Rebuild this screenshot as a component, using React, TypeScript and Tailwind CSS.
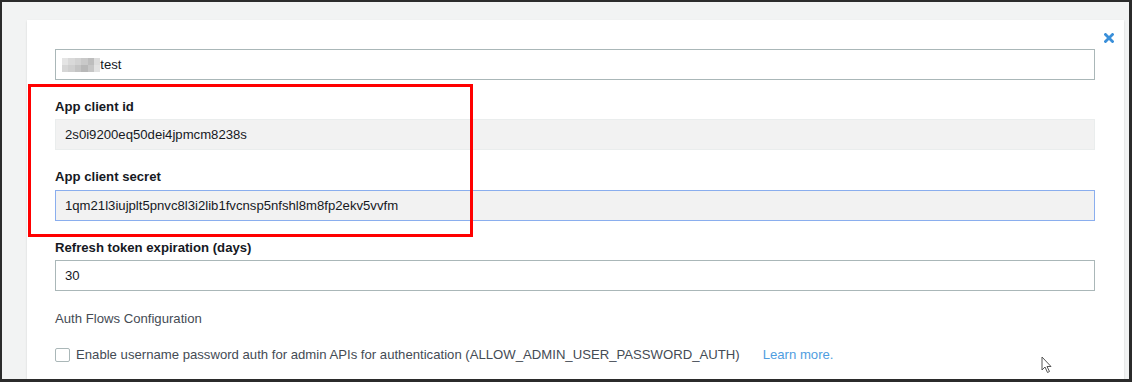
import React from "react";

const blur = [
  ["#e4e4e4", "#d9d9d9", "#d2d2d2", "#c9c9c9", "#bdbdbd", "#dcdcdc"],
  ["#d6d6d6", "#cfcfcf", "#c4c4c4", "#b8b8b8", "#c6c6c6", "#e2e2e2"],
];

export default function App() {
  return (
    <div className="w-[1132px] h-[382px] box-border overflow-hidden bg-[#f2f3f3] border-t-2 border-l-2 border-r-[3px] border-b-[3px] border-[#2b2b2b] pl-[25px] pt-[18px] pr-[5px] flex font-[family-name:Liberation_Sans,Arial,sans-serif] text-[13.15px] text-[#16191f]">
      <div className="relative flex-1 bg-white pl-[28px] pr-[29px] pt-[29px] shadow-[0_1px_2px_rgba(0,0,0,0.12)]">
        {/* close */}
        <svg className="absolute left-[1077px] top-[13px]" width="10" height="10" viewBox="0 0 10 10">
          <path d="M1.5 1.5 L8.5 8.5 M8.5 1.5 L1.5 8.5" stroke="#3a8fd9" strokeWidth="2.8" strokeLinecap="square" />
        </svg>

        {/* red annotation box */}
        <div className="absolute left-[1px] top-[64px] w-[445px] h-[153px] border-[3px] border-[#ff0000]" />

        {/* name input */}
        <div className="h-[31px] border border-[#aab7b8] bg-white flex items-center pl-[6px]">
          <div className="flex flex-col">
            {blur.map((row, i) => (
              <div key={i} className="flex">
                {row.map((c, j) => (
                  <div key={j} className="w-[6.4px] h-[7px]" style={{ backgroundColor: c }} />
                ))}
              </div>
            ))}
          </div>
          <span className="leading-[20px]">test</span>
        </div>

        <div className="mt-[17px] h-[20px] leading-[20px] font-bold">App client id</div>
        <div className="mt-[2px] h-[31px] border border-[#eaeded] bg-[#f2f2f2] flex items-center pl-[9px] text-[#16191f]">
          2s0i9200eq50dei4jpmcm8238s
        </div>

        <div className="mt-[17px] h-[20px] leading-[20px] font-bold">App client secret</div>
        <div className="mt-[3px] h-[31px] border border-[#8aaeee] bg-[#f2f2f2] flex items-center pl-[9px] text-[#16191f]">
          1qm21l3iujplt5pnvc8l3i2lib1fvcnsp5nfshl8m8fp2ekv5vvfm
        </div>

        <div className="mt-[17px] h-[20px] leading-[20px] font-bold">Refresh token expiration (days)</div>
        <div className="mt-[2px] h-[31px] border border-[#aab7b8] bg-white flex items-center pl-[9px]">
          30
        </div>

        <div className="mt-[18px] h-[20px] leading-[20px] text-[#444b54]">Auth Flows Configuration</div>

        <div className="mt-[16px] h-[20px] flex items-center">
          <div className="w-[15px] h-[14px] border border-[#aab7b8] rounded-[2px] bg-white" />
          <span className="ml-[6px] leading-[20px] text-[#444b54]">
            Enable username password auth for admin APIs for authentication (ALLOW_ADMIN_USER_PASSWORD_AUTH)
          </span>
          <span className="ml-[23px] leading-[20px] text-[#4f9de0]">Learn more.</span>
        </div>

        {/* mouse cursor */}
        <svg className="absolute left-[1014px] top-[336px]" width="12" height="18" viewBox="0 0 12 18">
          <path
            d="M1 1 L1 14 L4 11 L6.5 16.5 L8.5 15.5 L6 10.5 L10 10.5 Z"
            fill="white"
            stroke="#555"
            strokeWidth="1"
            strokeLinejoin="round"
          />
        </svg>
      </div>
    </div>
  );
}
